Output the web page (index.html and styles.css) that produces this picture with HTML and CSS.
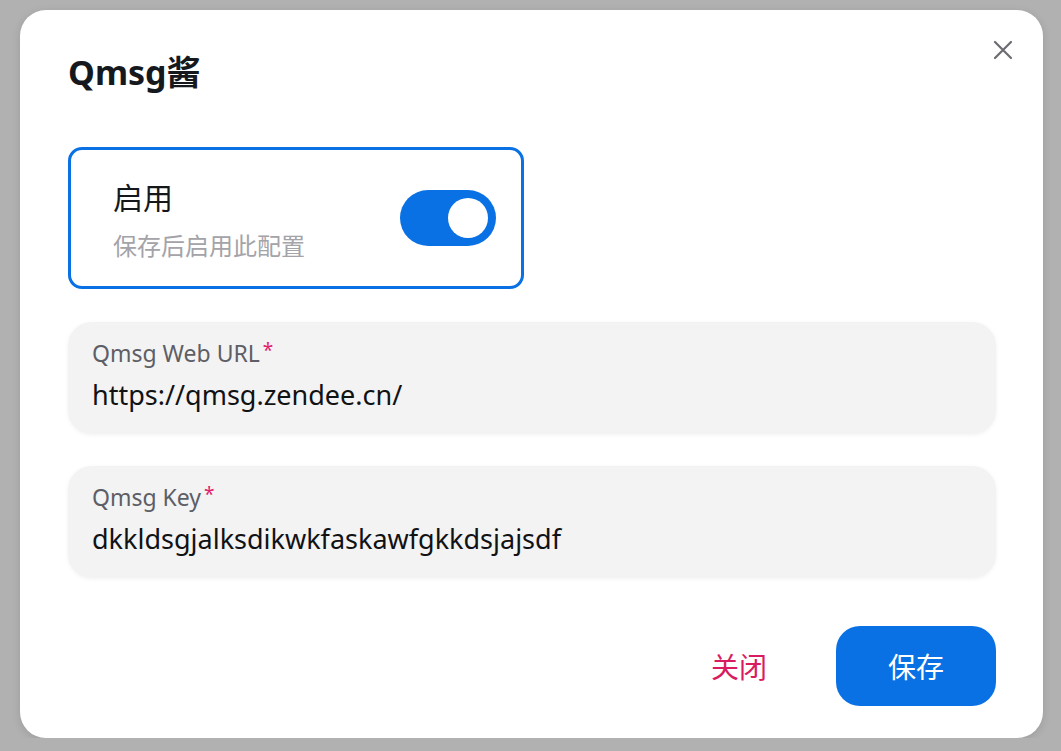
FILE: index.html
```html
<!DOCTYPE html>
<html lang="zh-CN">
<head>
    <meta charset="UTF-8">
    <meta name="viewport" content="width=device-width, initial-scale=1.0">
    <title>Qmsg酱</title>
    <link rel="stylesheet" href="styles.css">
</head>
<body>
    <div class="modal">
        <div class="modal-header">
            <h1>Qmsg酱</h1>
        </div>
        <button class="close-btn" aria-label="关闭">
            <svg width="20" height="20" viewBox="0 0 20 20">
                <path d="M2 2 L18 18 M18 2 L2 18" stroke="#6b6c72" stroke-width="2.2" stroke-linecap="round" fill="none"/>
            </svg>
        </button>

        <div class="switch-card">
            <div class="switch-text">
                <div class="switch-title">启用</div>
                <div class="switch-desc">保存后启用此配置</div>
            </div>
            <div class="toggle on"><span class="knob"></span></div>
        </div>

        <div class="field">
            <label>Qmsg Web URL<span class="req">*</span></label>
            <div class="value">https://qmsg.zendee.cn/</div>
        </div>
        <div class="field">
            <label>Qmsg Key<span class="req">*</span></label>
            <div class="value">dkkldsgjalksdikwkfaskawfgkkdsjajsdf</div>
        </div>

        <div class="modal-footer">
            <button class="text-btn">关闭</button>
            <button class="primary-btn">保存</button>
        </div>
    </div>
</body>
</html>
```

FILE: styles.css
```css
body {
    margin: 0;
    padding: 10px 0 0 20px;
    background: #b1b1b1;
    font-family: "Noto Sans", "Noto Sans CJK SC", sans-serif;
    color: #16181b;
}
.modal {
    position: relative;
    box-sizing: border-box;
    width: 1023px;
    height: 728px;
    padding: 40px 47px 32px 48px;
    background: #fff;
    border-radius: 26px;
    box-shadow: 0 2px 8px rgba(0, 0, 0, 0.12);
}
.modal-header h1 {
    margin: 0;
    font-size: 34px;
    line-height: 44px;
    font-weight: 700;
    color: #15191d;
}
.close-btn {
    position: absolute;
    top: 30px;
    right: 30px;
    width: 20px;
    height: 20px;
    padding: 0;
    border: none;
    background: none;
    cursor: pointer;
}
.close-btn svg {
    display: block;
}
.switch-card {
    box-sizing: border-box;
    width: 456px;
    height: 142px;
    margin-top: 53px;
    padding: 0 25px 0 42px;
    border: 3px solid #0a71e5;
    border-radius: 14px;
    display: flex;
    align-items: center;
    justify-content: space-between;
}
.switch-text {
    padding-top: 5px;
}
.switch-title {
    font-size: 30px;
    line-height: 36px;
    color: #15181b;
}
.switch-desc {
    margin-top: 15px;
    font-size: 24px;
    line-height: 30px;
    color: #a3a3a8;
}
.toggle {
    width: 96px;
    height: 56px;
    border-radius: 28px;
    background: #0a71e5;
    display: flex;
    align-items: center;
    justify-content: flex-end;
    padding-right: 8px;
    box-sizing: border-box;
}
.knob {
    width: 40px;
    height: 40px;
    border-radius: 50%;
    background: #fff;
}
.field {
    box-sizing: border-box;
    width: 928px;
    height: 112px;
    margin-top: 33px;
    padding: 16px 24px 0 24px;
    background: #f3f3f3;
    border-radius: 24px;
    box-shadow: 0 1px 4px rgba(0, 0, 0, 0.06);
}
.field + .field {
    margin-top: 32px;
}
.field label {
    display: block;
    font-size: 23px;
    line-height: 30px;
    color: #5d5e66;
}
.req {
    color: #e2206b;
    margin-left: 3px;
    font-size: 19px;
    vertical-align: top;
    line-height: 24px;
}
.value {
    margin-top: 9px;
    font-size: 27px;
    line-height: 36px;
    color: #111214;
}
.modal-footer {
    margin-top: 48px;
    width: 928px;
    display: flex;
    justify-content: flex-end;
    align-items: center;
    gap: 45px;
}
.text-btn {
    padding: 0 24px;
    height: 80px;
    border: none;
    background: none;
    font-family: inherit;
    font-size: 28px;
    color: #d81c5f;
    cursor: pointer;
}
.primary-btn {
    width: 160px;
    height: 80px;
    border: none;
    border-radius: 24px;
    background: #0a71e5;
    color: #fff;
    font-family: inherit;
    font-size: 28px;
    cursor: pointer;
}
```
